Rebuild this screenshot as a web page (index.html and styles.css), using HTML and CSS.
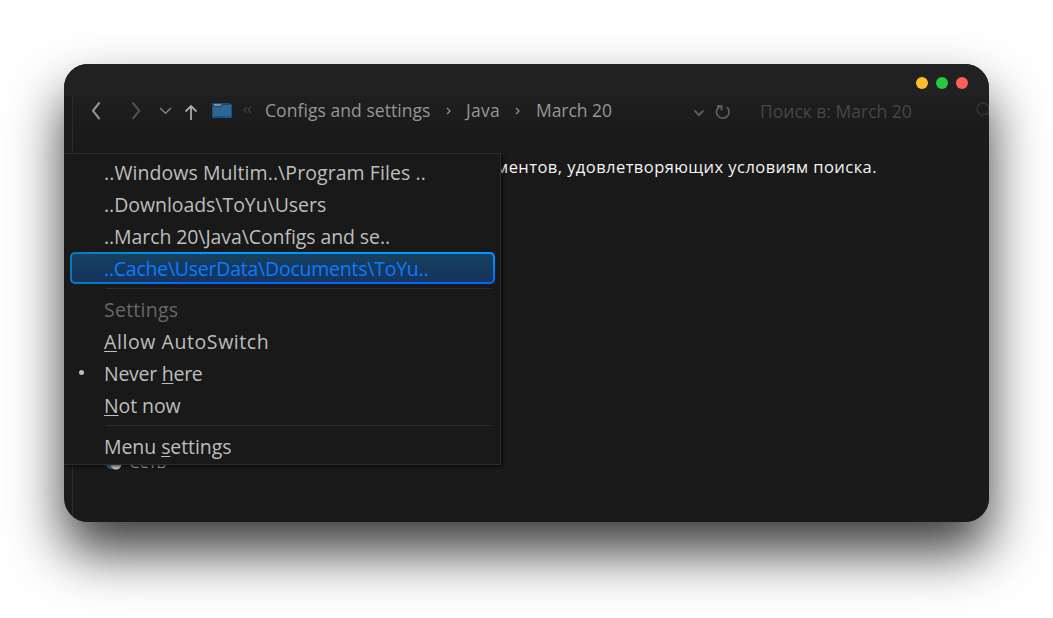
FILE: index.html
```html
<!DOCTYPE html>
<html lang="ru">
<head>
<meta charset="utf-8">
<title>March 20</title>
<link rel="stylesheet" href="styles.css">
</head>
<body>
<main class="window">
  <header class="titlebar">
    <span class="dot dot-yellow"></span><span class="dot dot-green"></span><span class="dot dot-red"></span>
  </header>
  <section class="content">
    <div class="pane">
      <nav class="toolbar">
        <svg class="nav-icons" width="180" height="30" viewBox="73 96 180 30" fill="none">
          <path d="M99.500 102.500L93 110.800L99.500 119" stroke="#929292" stroke-width="2.100"/>
          <path d="M132.500 102.500L139.200 110.800L132.500 119" stroke="#505050" stroke-width="2.100"/>
          <path d="M160 108L165.500 113.300L171 108" stroke="#858585" stroke-width="1.300"/>
          <path d="M191 120V106M185.500 111.500L191 106L196.500 111.500" stroke="#aaa" stroke-width="1.800"/>
          <path d="M213 103H229L231 104H232V118H212V104Z" fill="#19517e"/>
          <path d="M214 104H231L230 106H214Z" fill="#204966"/>
          <path d="M214 104H222L220 106H214Z" fill="#858c91"/>
          <path d="M213 107H221L223 105H231V116H213Z" fill="#306792"/>
          <path d="M212 117.500H232" stroke="#075b9e"/>
          <path d="M247 107L244 110L247 113M251 107L248 110L251 113" stroke="#424242" stroke-width="1.200"/>
        </svg>
        <span class="crumb crumb-configs">Configs and settings</span>
        <svg class="sep sep-first" width="6" height="10" fill="none"><path d="M1 2L4 5L1 8" stroke="#888" stroke-width="1.400"/></svg>
        <span class="crumb crumb-java">Java</span>
        <svg class="sep sep-second" width="6" height="10" fill="none"><path d="M1 2L4 5L1 8" stroke="#888" stroke-width="1.400"/></svg>
        <span class="crumb crumb-march">March 20</span>
        <svg class="actions" width="42" height="24" viewBox="692 100 42 24" fill="none">
          <path d="M694.500 110.500L699 115L703.500 110.500" stroke="#5c5c5c" stroke-width="2"/>
          <path d="M717 106H721.500V110.500M727 107.200A6.300 6.300 0 1 1 718 107.800L721.500 106.500" stroke="#5c5c5c" stroke-width="1.800"/>
        </svg>
        <span class="search">Поиск в: March 20</span>
        <svg class="magnifier" width="20" height="20" fill="none"><circle cx="8" cy="8" r="6" stroke="#343434" stroke-width="1.500"/><path d="M12 12L17 17" stroke="#343434" stroke-width="1.500"/></svg>
      </nav>
      <p class="message">Нет элементов, удовлетворяющих условиям поиска.</p>
      <div class="network">
        <svg width="18" height="18"><circle cx="7" cy="9" r="7" fill="#426b9e"/><circle cx="11" cy="11" r="5.500" fill="#ccd0d3"/></svg>
        <span>Сеть</span>
      </div>
    </div>
    <div class="menu">
      <div class="item"><span class="path1">..Windows Multim..\Program Files ..</span></div>
      <div class="item"><span class="path2">..Downloads\ToYu\Users</span></div>
      <div class="item"><span class="path3">..March 20\Java\Configs and se..</span></div>
      <div class="item selected"><span class="path4">..Cache\UserData\Documents\ToYu..</span></div>
      <div class="rule"></div>
      <div class="item muted"><span class="label-settings">Settings</span></div>
      <div class="item"><span class="label-allow"><u>A</u>llow AutoSwitch</span></div>
      <div class="item checked"><span class="label-never">Never <u>h</u>ere</span></div>
      <div class="item"><span class="label-not"><u>N</u>ot now</span></div>
      <div class="rule"></div>
      <div class="item"><span class="label-menu">Menu <u>s</u>ettings</span></div>
    </div>
  </section>
</main>
</body>
</html>
```
FILE: styles.css
```css
* { box-sizing: border-box; }
body { margin: 0; width: 1053px; height: 618px; padding: 64px; overflow: hidden; background: #fff; font-family: "Open Sans", "Noto Sans", sans-serif; }
.window { width: 925px; height: 458px; border-radius: 24px; overflow: hidden; background: #1b1b1b; box-shadow: 0 30px 54px rgba(0,0,0,.77); }
.titlebar { height: 32px; background: #212121; display: flex; justify-content: flex-end; align-items: center; gap: 8px; padding: 6px 21px 0 0; }
.dot { width: 12px; height: 12px; border-radius: 50%; }
.dot-yellow { background: #ffbd2e; }
.dot-green { background: #28c840; }
.dot-red { background: #ff5f57; }
.content { position: relative; height: 426px; padding-left: 8px; overflow: hidden; }
.pane { height: 100%; border-left: 1px solid #2b2b2b; background: linear-gradient(#1f1f1f, #1a1a1a 35px); }
.toolbar { display: flex; height: 57px; align-items: flex-start; white-space: nowrap; }
.nav-icons { flex: none; margin-right: 12px; }
.crumb { flex: none; font-size: 17.5px; line-height: 29px; color: #969696; }
.crumb-configs { width: 184px; letter-spacing: .06px; }
.crumb-java { width: 49px; letter-spacing: .25px; }
.crumb-march { width: 156px; letter-spacing: -.05px; }
.sep { flex: none; margin-top: 10px; }
.sep-first { margin-right: 14px; margin-left: -3px; }
.sep-second { margin-right: 15px; }
.actions { flex: none; margin-top: 4px; }
.search { flex: none; width: 241px; padding-left: 26px; font-size: 17.5px; line-height: 31px; color: #464646; }
.magnifier { flex: none; margin-top: 5px; }
.message { margin: 0; padding: 3px 112px 0 0; text-align: right; color: #f4f4f4; font-size: 16.5px; letter-spacing: .44px; line-height: 22px; white-space: nowrap; }
.network { display: flex; gap: 6px; padding: 273px 0 0 32px; font-size: 16.5px; line-height: 22px; color: #a8a8a8; }
.network svg { margin-top: 2px; }
.menu { position: absolute; left: 0; top: 57px; width: 437px; height: 312px; padding: 2px 5px 0; background: #191919; border: solid #2d2d2d; border-width: 1px 1px 1px 0; box-shadow: 2px 2px 3px rgba(0,0,0,.55); }
.item { height: 32px; padding: 2px 0 0 35px; display: flex; align-items: center; font-size: 19.5px; line-height: 28px; color: #bebebe; white-space: nowrap; }
.item u { text-decoration-thickness: 1px; text-underline-offset: 2px; text-decoration-skip-ink: none; }
.selected { width: 425px; margin-left: 1px; padding-left: 32px; border: 2px solid transparent; border-radius: 5px; color: #0a7cff; background: linear-gradient(#15415f, #15335e) padding-box, linear-gradient(90deg, #087bbd, transparent 30%) border-box, linear-gradient(#0098ff, #0069ff) border-box; }
.muted { color: #676767; }
.rule { height: 1px; background: #2c2c2c; margin: 4px 3px 4px 37px; }
.checked::before { content: ""; width: 5px; height: 5px; margin: 0 20px 3px -25px; border-radius: 50%; background: #bdbdbd; }
.path1 { letter-spacing: .07px; }
.path2 { letter-spacing: -.05px; }
.path3 { letter-spacing: -.09px; }
.path4 { letter-spacing: -.24px; }
.label-settings { letter-spacing: .25px; }
.label-allow { letter-spacing: .58px; }
.label-never { letter-spacing: -.27px; }
.label-not { letter-spacing: -.1px; }
.label-menu { letter-spacing: -.07px; }
```
